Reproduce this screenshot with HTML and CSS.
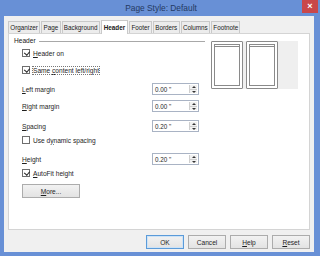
FILE: index.html
```html
<!DOCTYPE html>
<html>
<head>
<meta charset="utf-8">
<link rel="stylesheet" href="styles.css">
</head>
<body>
<div class="window">
  <div class="titlebar">
    <span class="title">Page Style: Default</span>
    <span class="close">×</span>
  </div>
  <div class="client">
    <div class="tabs">
      <span class="tab">Organizer</span>
      <span class="tab">Page</span>
      <span class="tab">Background</span>
      <span class="tab active">Header</span>
      <span class="tab">Footer</span>
      <span class="tab">Borders</span>
      <span class="tab">Columns</span>
      <span class="tab">Footnote</span>
    </div>
    <div class="panel">
      <div class="form">
        <div class="section"><span>Header</span><i class="rule"></i></div>
        <label class="check r1"><span class="box on"></span><span><u>H</u>eader on</span></label>
        <label class="check r2"><span class="box on"></span><span class="focus">Same <u>c</u>ontent left/right</span></label>
        <div class="field r3"><span class="lbl"><u>L</u>eft margin</span><span class="spin"><span class="val">0.00 "</span><span class="arrows"><i class="up"></i><i class="down"></i></span></span></div>
        <div class="field r4"><span class="lbl"><u>R</u>ight margin</span><span class="spin"><span class="val">0.00 "</span><span class="arrows"><i class="up"></i><i class="down"></i></span></span></div>
        <div class="field r5"><span class="lbl"><u>S</u>pacing</span><span class="spin"><span class="val">0.20 "</span><span class="arrows"><i class="up"></i><i class="down"></i></span></span></div>
        <label class="check r6"><span class="box"></span><span>Use d<u>y</u>namic spacing</span></label>
        <div class="field r7"><span class="lbl"><u>H</u>eight</span><span class="spin"><span class="val">0.20 "</span><span class="arrows"><i class="up"></i><i class="down"></i></span></span></div>
        <label class="check r8"><span class="box on"></span><span><u>A</u>utoFit height</span></label>
        <div class="more-row"><span class="btn more"><u>M</u>ore...</span></div>
      </div>
      <div class="preview">
        <div class="pg"><div class="pg-in"></div></div>
        <div class="pg"><div class="pg-in"></div></div>
      </div>
    </div>
    <div class="buttons">
      <span class="btn default">OK</span>
      <span class="btn">Cancel</span>
      <span class="btn"><u>H</u>elp</span>
      <span class="btn"><u>R</u>eset</span>
    </div>
  </div>
</div>
</body>
</html>
```

FILE: styles.css
```css
* { box-sizing: border-box; }
html, body { margin: 0; padding: 0; background: #ffffff; }
body {
  width: 320px; height: 258px; overflow: hidden;
  font-family: "Liberation Sans", Arial, sans-serif;
  font-size: 6.6px; color: #1e1e1e;
}
u { text-decoration: underline; text-underline-offset: 1px; }
.window {
  width: 320px; height: 256px;
  background: #6890d6;
  padding: 0 6px 4px 4px;
  display: flex; flex-direction: column;
}
.titlebar {
  height: 16px; position: relative;
  display: flex; align-items: center; justify-content: center;
}
.title { font-size: 8.4px; color: #243a63; margin-top: -1px; margin-left: 4px; }
.close {
  position: absolute; right: -4px; top: 0;
  width: 16px; height: 13px; background: #c9474a;
  color: #fff; font-size: 9px; font-weight: bold;
  display: flex; align-items: center; justify-content: center; line-height: 1;
}
.client {
  flex: 1; background: #f0f0f0;
  padding: 3px 4px 0 4px;
  display: flex; flex-direction: column;
}
.tabs { display: flex; align-items: flex-end; height: 14px; }
.tab {
  height: 12px; padding: 0 1.3px; margin-right: 1px;
  border: 1px solid #c9c9c9; border-bottom: none;
  background: #ececec; color: #202020;
  display: flex; align-items: center; font-size: 6.3px;
}
.tab.active {
  height: 14px; background: #ffffff; font-weight: bold;
  margin-bottom: -1px; position: relative; z-index: 1; padding: 0 2px;
}
.panel {
  height: 197px; background: #ffffff; border: 1px solid #d4d4d4;
  display: flex; padding: 2px 0 0 5px;
}
.form { width: 186px; display: flex; flex-direction: column; }
.section { display: flex; align-items: center; height: 9px; }
.section span { color: #202020; }
.rule { flex: 1; height: 1px; background: #a8a8a8; margin-left: 3px; margin-top: 1px; margin-right: -5px; }
.check { display: flex; align-items: center; height: 12px; padding-left: 8px; }
.box {
  width: 8px; height: 8px; border: 1px solid #6e6e6e; background: #fff;
  margin-right: 3px; position: relative; flex: none;
}
.box.on::after {
  content: ""; position: absolute; left: 1.5px; top: 0px;
  width: 2.5px; height: 4px; border: solid #202020; border-width: 0 1.3px 1.3px 0;
  transform: rotate(40deg);
}
.focus { outline: 1px dotted #777; outline-offset: 0; }
.field { display: flex; align-items: center; height: 12px; padding-left: 8px; }
.lbl { flex: 1; }
.spin {
  width: 47px; height: 12px; border: 1px solid #a9b3c4; background: #fff;
  display: flex; align-items: stretch; margin-right: 1px;
}
.val { flex: 1; padding-left: 2px; display: flex; align-items: center; font-size: 6.3px; }
.arrows {
  width: 8px; display: flex; flex-direction: column; border-left: 1px solid #cfcfcf;
  background: #f1f1f1; margin: 1px 1px 1px 0;
}
.arrows i { flex: 1; position: relative; }
.arrows i.up { border-bottom: 1px solid #cfcfcf; }
.arrows i.up::after, .arrows i.down::after {
  content: ""; position: absolute; left: 1.5px; top: 1px;
  border-left: 2px solid transparent; border-right: 2px solid transparent;
}
.arrows i.up::after { border-bottom: 2px solid #333; }
.arrows i.down::after { border-top: 2px solid #333; top: 1px; }
.r1 { margin-top: 2px; }
.r2 { margin-top: 5px; }
.r3 { margin-top: 7px; }
.r4 { margin-top: 5px; }
.r5 { margin-top: 8px; }
.r6 { margin-top: 2px; }
.r7 { margin-top: 7px; }
.r8 { margin-top: 2px; }
.more-row { padding-left: 8px; margin-top: 5px; }
.btn {
  display: inline-flex; align-items: center; justify-content: center;
  height: 14px; border: 1px solid #acacac;
  background: linear-gradient(#f2f2f2, #e3e3e3); color: #1e1e1e; font-size: 6.6px;
}
.more { width: 58px; }
.preview {
  margin-top: 5px; margin-left: 11px; width: 87px; height: 48px;
  background: #efefef; display: flex; gap: 3px;
}
.pg {
  width: 32px; height: 48px; border: 1px solid #8a8a8a; background: #fff;
  padding: 2px; border-radius: 1px;
}
.pg-in {
  width: 100%; height: 100%; border: 1px solid #8a8a8a;
  border-top: 3px double #8a8a8a;
}
.buttons {
  display: flex; justify-content: flex-end; gap: 4px; margin-top: 5px;
}
.buttons .btn { width: 38px; }
.buttons .btn.default { border-color: #5b9bd9; box-shadow: inset 0 0 0 1px #cde3f7; }
```
